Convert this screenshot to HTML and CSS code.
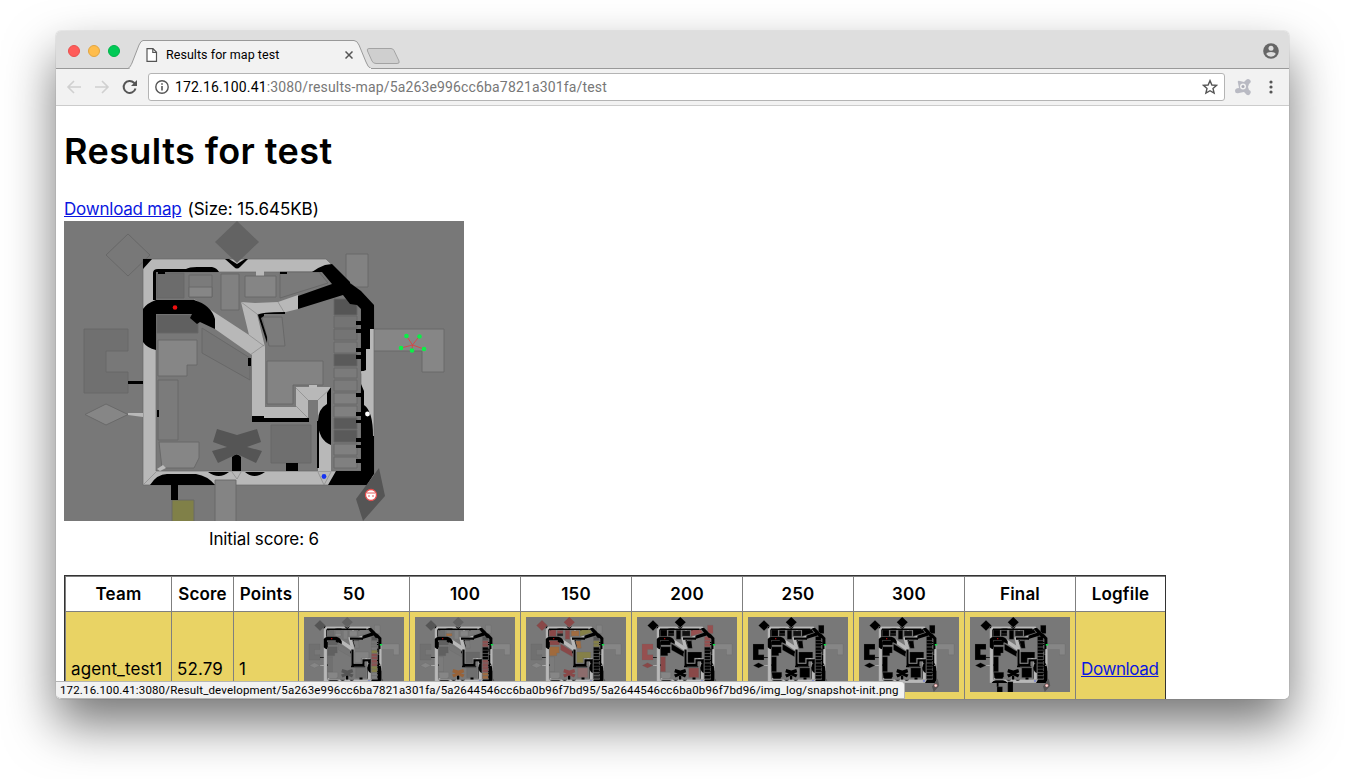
FILE: index.html
```html
<!DOCTYPE html>
<html lang="en">
<head>
<meta charset="utf-8">
<title>Results for map test</title>
<link rel="stylesheet" href="styles.css">
</head>
<body>
<svg class="defs" width="0" height="0" aria-hidden="true">
  <symbol id="map" viewBox="0 0 400 300">
    <rect width="400" height="300" fill="#787878"/>
    <g class="outline">
      <path class="dia1" d="M64 13 86 34 64 55 42 34Z"/>
      <path class="west" d="M20 108H64V130H42V151H64V172H20Z"/>
      <path class="wdia" d="M21 193.500 42 183 64 193.500 42 204Z"/>
      <path class="ne" d="M282 33H304V66H282Z"/>
      <path class="refuge" d="M306 108H380V151H358V130H306Z"/>
    </g>
    <path d="M79 38H262L310 85V264H79ZM92 51V250H297V88L260 51Z" fill="#b8b8b8" fill-rule="evenodd" stroke="#696969" stroke-width=".7"/>
    <path d="M79 48V38H88ZM64 160H79V163H64Z"/>
    <path d="M64 192H79V196L64 194ZM192 50H200V55H192Z" fill="#b8b8b8"/>
    <path class="dia2" d="M173 0 195 21 173 42 151 21Z"/>
    <path d="M161 38H165L173 43 181 38H184L176 46Q173 49 170 46Z"/>
    <path d="M130 78 185 114 177 81 191 82 214 81 234 74V88L222 91 193 93 201 126V186H232V166H267V250H254V179H244V197H188V134L151 108Z" fill="#b8b8b8"/>
    <path d="M185 114 200 125M200 124 186 134M177 81 193 93M214 81 220 91M232 167 244 179M267 167 254 179M232 185 244 197" fill="none" stroke="#808080" stroke-width=".6"/>
    <g class="outline">
      <path class="n1" d="M93 52H120V77H93Z"/>
      <path class="n2" d="M125 54H148V76H125Z"/>
      <path class="n2b" d="M125 66H148V76H125Z"/>
      <path class="n3" d="M157 53H175V89H157Z"/>
      <path class="n4" d="M181 55H212V76H181Z"/>
      <path class="quad" d="M216 51H255L264 62 216 77Z"/>
      <path class="nw" d="M93 94H134V112H93Z"/>
      <path class="w" d="M94 119H133V144H123V155H94Z"/>
      <path class="slant" d="M138 107 186 137V159L138 132Z"/>
      <path class="wedge" d="M198 96H218L221 125H205Z"/>
      <path class="mid" d="M203 140H259V164H229V183H203Z"/>
      <path class="low" d="M94 159H114V219H94Z"/>
      <path class="sw" d="M95 221H135V237L130 247H98Z"/>
      <path class="square" d="M207 204H247V242H207Z"/>
      <path class="stem" d="M151 259H172V301H151Z"/>
      <path class="olive" d="M108 279H130V301H108Z"/>
      <path class="c1" d="M270 78H293V94H270Z"/>
      <path class="c2" d="M270 95H293V107H270ZM270 108H293V119H270Z"/>
      <path class="c3" d="M270 121H293V132H270Z"/>
      <path class="c4" d="M270 133H293V145H270Z"/>
      <path class="c5" d="M270 147H293V157H270ZM270 159H293V170H270Z"/>
      <path class="c6" d="M270 172H293V183H270ZM270 185H293V196H270Z"/>
      <path class="c7" d="M270 197H293V208H270ZM270 209H293V221H270Z"/>
      <path class="c8" d="M270 223H293V234H270ZM270 236H293V247H270Z"/>
    </g>
    <path class="cross" d="M153 208 173 214 193 208 197 221 183 226 198 230 192 242 173 233 154 242 148 230 163 226 149 221Z"/>
    <path d="M89 79V52Q89 48 94 48H122Q125 46 133 46H148Q153 47 155 51H101V53H94V51H92V79ZM79 88Q83 82 92 79H130Q147 84 151 98V108L136 101 133 103 126 97 128 93H92V129Q83 127 79 121Z"/>
    <path d="M248 51Q255 46 261 44L268 43 286 61V56H286V62L297 70 310 84V108H306V128H302V150H297V88L293 84 286 83 279 74 234 88V75L268 63 258 51Z"/>
    <path d="M302 130H309V190H306Q302 160 297 151L302 149V130Z" fill="#b8b8b8"/>
    <path d="M297 150V163L300 170V184Q309 190 309 215H310V253L303 264H264L272 250H297Z"/>
    <path d="M292 100H298V104H292ZM292 108H298V112H292ZM292 127H298V131H292ZM292 134H298V138H292ZM292 172H298V176H292ZM292 191H298V195H292ZM292 199H298V202H292ZM292 217H298V221H292ZM292 224H298V227H292ZM292 238H298V242H292ZM216 51H223V53H216ZM184 137H187V145H184ZM93 189H95V196H93Z"/>
    <path d="M267 166V224Q254 219 254 200 254 188 263 183V172ZM253 200H255V247H253ZM188 195H200V197H245V201H188ZM222 242H234V250H222ZM168 250V236Q173 231 177 236V250ZM107 264H114V279H107ZM86 264Q93 253 103 253H132Q144 255 151 264ZM144 251H165Q155 259 144 251ZM181 251H201Q190 259 181 251ZM194 94Q196 91 221 91V93H200V95L197 97 203 116V122Z"/>
    <path d="M93 248 99 244 102 247 96 250ZM245 164H253V167H245Z" fill="#bbb"/>
    <path d="M79 264 92 251M168 251 173 258 177 251M254 251 260 264 267 251" fill="none" stroke="#888" stroke-width=".7"/>
    <g class="blocked" fill="none" stroke="#000" stroke-width="9">
      <path d="M194 130V191H238V173H261V186M184 86H236"/>
      <path d="M92 49H250M298 150V260M92 100V122" stroke-width="6"/>
    </g>
    <path class="ambulance" d="M315 247 321 275 299 300 292 278Z"/>
    <g class="team-marks">
      <path d="M342.500 115 348.500 124 355.500 115M337 127 348.500 124 360 128M348.500 124 348 129" fill="none" stroke="#e33b3b" stroke-width=".8"/>
      <g fill="#0bef47"><circle cx="342.500" cy="115" r="2.300"/><circle cx="355.500" cy="115.500" r="2.300"/><circle cx="337" cy="127" r="2.300"/><circle cx="348" cy="129.500" r="2.300"/><circle cx="360" cy="128" r="2.300"/></g>
    </g>
    <path class="beacon" d="M303 108H313V114H303Z"/>
    <circle cx="111" cy="86.500" r="2.300" fill="#f01010"/>
    <circle cx="303.500" cy="193" r="2.400" fill="#fff"/>
    <circle cx="260" cy="255.500" r="2.400" fill="#1633f2"/>
    <circle cx="307" cy="274" r="5.500" fill="#fff" stroke="#e64b4b" stroke-width="1.300"/>
    <path d="M303 272H311M304 275H306M308 275H310" stroke="#e35b5b"/>
  </symbol>
</svg>

<div class="window">
  <header class="tabstrip">
    <div class="lights"><i class="red"></i><i class="amber"></i><i class="green"></i></div>
    <div class="tab">
      <svg class="tab-shape" width="246" height="29" viewBox="0 0 246 29"><path d="M0 28.500C2 27.500 3 25 4 23L11 5Q13 .5 15 .5H226Q229 .5 231 5L238 22Q240 27.500 243 28.500" fill="#f2f2f2" stroke="#999"/><path d="M2 28.500H243" stroke="#f2f2f2"/></svg>
      <div class="tab-content">
        <svg width="12" height="14" viewBox="0 0 12 14"><path d="M1 .7H7L10.500 4.300V13.300H1ZM6.800.7V4.500H10.500" fill="#fff" stroke="#555" stroke-width="1.200"/></svg>
        <span class="tab-title">Results for map test</span>
        <svg class="tab-close" width="8" height="8" viewBox="0 0 8 8"><path d="M.5.5 7.500 7.500M7.500.5.5 7.500" stroke="#555" stroke-width="1.500"/></svg>
      </div>
    </div>
    <svg class="new-tab" width="36" height="18" viewBox="0 0 36 18"><path d="M3 1.500H25Q27 1.500 28 3.500L33 14Q34 16.500 31 16.500H10Q7 16.500 6 14L1.500 4Q.5 1.500 3 1.500Z" fill="#cfcfcf" stroke="#a3a3a3"/></svg>
    <svg class="profile" width="16" height="16" viewBox="0 0 16 16"><circle cx="8" cy="8" r="7.800" fill="#666"/><circle cx="8" cy="5.300" r="2.500" fill="#dedede"/><path d="M3.200 11Q4 8.900 8 8.900T12.800 11Q11 13.800 8 13.800T3.200 11Z" fill="#dedede"/></svg>
  </header>
  <div class="toolbar">
    <svg width="16" height="16" viewBox="0 0 16 16"><path d="M15 8H2M8 2 2 8 8 14" fill="none" stroke="#d0d0d0" stroke-width="1.600"/></svg>
    <svg width="16" height="16" viewBox="0 0 16 16"><path d="M1 8H14M8 2 14 8 8 14" fill="none" stroke="#d0d0d0" stroke-width="1.600"/></svg>
    <svg width="16" height="16" viewBox="0 0 16 16"><path d="M13.500 9.500A6 6 0 1 1 12 3.700L14 5.500" fill="none" stroke="#555" stroke-width="2"/><path d="M15 1V7H9Z" fill="#555"/></svg>
    <div class="address">
      <svg width="14" height="14" viewBox="0 0 14 14"><circle cx="7" cy="7" r="6.200" fill="none" stroke="#555" stroke-width="1.400"/><path d="M7 6V10.500M7 3.200V4.800" stroke="#555" stroke-width="1.600"/></svg>
      <span class="url"><b>172.16.100.41</b>:3080/results-map/5a263e996cc6ba7821a301fa/test</span>
      <svg class="star" width="16" height="16" viewBox="0 0 16 16"><path d="M8 1.600 9.900 6 14.600 6.400 11 9.500 12.100 14.100 8 11.700 3.900 14.100 5 9.500 1.400 6.400 6.100 6Z" fill="none" stroke="#555" stroke-width="1.400"/></svg>
    </div>
    <svg class="ext" width="18" height="18" viewBox="0 0 18 18"><path d="M4 5Q3 2 6 3L10 4 12 2Q14 0 16 2T15 6L14 9 15 12Q18 13 16 16T11 15L10 14 5 15Q1 16 1 13T5 10Z" fill="#b9bac3"/><circle cx="9" cy="8.500" r="3" fill="#f2f2f2"/><circle cx="9" cy="8.500" r="1.500" fill="#a9aab5"/></svg>
    <svg class="dots" width="4" height="14" viewBox="0 0 4 14"><g fill="#555"><circle cx="2" cy="2" r="1.600"/><circle cx="2" cy="7" r="1.600"/><circle cx="2" cy="12" r="1.600"/></g></svg>
  </div>
  <main class="page">
    <h1>Results for test</h1>
    <p class="download"><a href="#">Download map</a><span class="size">(Size: 15.645KB)</span></p>
    <figure>
      <svg class="map" width="400" height="300"><use href="#map"/></svg>
      <figcaption>Initial score: 6</figcaption>
    </figure>
    <table>
      <colgroup><col class="col-team"><col class="col-score"><col class="col-points"><col span="7" class="col-shot"><col class="col-log"></colgroup>
      <tr><th>Team</th><th>Score</th><th>Points</th><th>50</th><th>100</th><th>150</th><th>200</th><th>250</th><th>300</th><th>Final</th><th>Logfile</th></tr>
      <tr class="gold">
        <td><span class="team">agent_test1</span></td><td><span class="team">52.79</span></td><td>1</td>
        <td class="shot"><svg class="thumb t50"><use href="#map"/></svg></td>
        <td class="shot"><svg class="thumb t100"><use href="#map"/></svg></td>
        <td class="shot"><svg class="thumb t150"><use href="#map"/></svg></td>
        <td class="shot"><svg class="thumb t200"><use href="#map"/></svg></td>
        <td class="shot"><svg class="thumb burnt"><use href="#map"/></svg></td>
        <td class="shot"><svg class="thumb burnt"><use href="#map"/></svg></td>
        <td class="shot"><svg class="thumb burnt final"><use href="#map"/></svg></td>
        <td><a class="log" href="#">Download</a></td>
      </tr>
    </table>
  </main>
  <div class="status"><span>172.16.100.41:3080/Result_development/5a263e996cc6ba7821a301fa/5a2644546cc6ba0b96f7bd95/5a2644546cc6ba0b96f7bd96/img_log/snapshot-init.png</span></div>
</div>
</body>
</html>
```
FILE: styles.css
```css
* { box-sizing: border-box; }
body { margin: 0; padding: 31px 56px 80px; height: 779px; overflow: hidden; background: #fff; font-family: Inter, "Noto Sans CJK JP", sans-serif; color: #000; }
svg { display: block; flex: none; }
.defs { position: absolute; }
.window { position: relative; width: 1233px; height: 668px; border-radius: 5px; overflow: hidden; background: #fff; }
body::before { content: ""; position: absolute; left: 56px; top: 31px; width: 1233px; height: 668px; border-radius: 5px; box-shadow: 0 25px 50px rgba(0,0,0,.54), 0 0 1px rgba(0,0,0,.5); }

.tabstrip { display: flex; height: 38px; background: #dedede; border-bottom: 1px solid #999; }
.lights { display: flex; gap: 8px; padding: 14px 0 0 12px; width: 73px; flex: none; }
.lights i { width: 12px; height: 12px; border-radius: 50%; flex: none; }
.red { background: #ff5c5a; border: 1px solid #e9504e; }
.amber { background: #ffbd4c; border: 1px solid #e2a541; }
.green { background: #00ca56; border: 1px solid #00b34a; }
.tab { display: grid; width: 246px; height: 29px; margin-top: 9px; margin-left: -1px; flex: none; z-index: 1; }
.tab-shape, .tab-content { grid-area: 1 / 1; }
.tab-content { display: flex; align-items: center; padding: 0 21px 0 18px; z-index: 1; }
.tab-title { font: 12.5px/16px Roboto, sans-serif; margin-left: 8px; white-space: nowrap; letter-spacing: .05px; }
.tab-close { margin-left: auto; }
.new-tab { margin: 16px 0 0 -8px; }
.profile { margin: 12px 10px 0 auto; }

.toolbar { display: flex; align-items: center; height: 37px; padding: 0 16px 0 10px; background: #f2f2f2; border-bottom: 1px solid #ccc; gap: 12px; }
.address { display: flex; align-items: center; width: 1077px; height: 28px; margin-left: -2px; padding: 0 6px; background: #fff; border: 1px solid #b4b4b4; border-radius: 3px; }
.url { font: 14px/18px Roboto, sans-serif; color: #777; margin-left: 6px; letter-spacing: .15px; }
.url b { color: #000; font-weight: 400; }
.star { margin-left: auto; }
.ext { margin-left: -3px; }
.dots { margin-left: 5px; }

.page { padding: 22px 8px 0; font-size: 17px; line-height: 24px; }
h1 { margin: 0; font-size: 36px; line-height: 46px; font-weight: 600; white-space: nowrap; letter-spacing: .42px; }
.download { display: flex; gap: 6px; margin: 23px 0 0; height: 24px; white-space: nowrap; letter-spacing: -.22px; }
.size { letter-spacing: -.03px; }
a { color: #0a17e0; }
figure { margin: 0; width: 400px; }
figcaption { text-align: center; margin-top: 6px; letter-spacing: -.12px; }
table { table-layout: fixed; width: 1102px; margin-top: 24px; border: 1px solid #333; border-spacing: 0; }
th, td { padding: 0 5px; border-left: 1px solid #7f7f7f; border-top: 1px solid #7f7f7f; white-space: nowrap; }
th { height: 35px; padding: 0; font-weight: 600; letter-spacing: .18px; }
td { height: 115px; }
.gold { background: #e9d364; }
.shot { padding: 5px; vertical-align: top; }
.team { letter-spacing: .12px; }
.log { letter-spacing: -.38px; }
.col-team { width: 106px; } .col-score { width: 62px; } .col-points { width: 65px; } .col-shot { width: 111px; } .col-log { width: 90px; }

.status { position: absolute; left: 0; bottom: 0; height: 18px; width: 849px; padding-left: 4px; background: #f2f2f2; border: 1px solid #b5b5b5; border-left: 0; border-radius: 0 4px 0 5px; font: 11.5px/16px Roboto, sans-serif; letter-spacing: .16px; white-space: nowrap; }

.outline { stroke: #666; stroke-width: .9; }
.dia1 { fill: var(--dia1, #787878); } .dia2 { fill: var(--dia2, #636363); }
.west { fill: var(--west, #707070); } .wdia { fill: var(--wdia, #868686); }
.ne { fill: var(--ne, #828282); } .refuge { fill: #868686; }
.n1 { fill: var(--n1, #6c6c6c); } .n2 { fill: var(--n2, #7b7b7b); } .n2b { fill: var(--n2b, #868686); }
.n3 { fill: var(--n3, #818181); } .n4 { fill: var(--n4, #858585); } .quad { fill: var(--quad, #7a7a7a); }
.nw { fill: var(--nw, #606060); } .w { fill: var(--w, #868686); } .slant { fill: var(--slant, #757575); }
.wedge { fill: var(--wedge, #7b7b7b); } .mid { fill: var(--mid, #838383); } .low { fill: var(--low, #7b7b7b); }
.sw { fill: var(--sw, #868686); } .square { fill: var(--square, #6f6f6f); } .cross { fill: var(--cross, #555); }
.stem { fill: var(--stem, #848484); } .olive { fill: var(--olive, #808048); }
.c1 { fill: var(--c1, #555); } .c2 { fill: var(--c2, #747474); } .c3 { fill: var(--c3, #7b7b7b); } .c4 { fill: var(--c4, #5a5a5a); }
.c5 { fill: var(--c5, #7b7b7b); } .c6 { fill: var(--c6, #808080); } .c7 { fill: var(--c7, #5a5a5a); } .c8 { fill: var(--c8, #808080); }
.ambulance { fill: #555; }
.blocked { display: var(--blocked, none); }
.beacon { display: var(--blocked, none); fill: #0bdf47; }
.team-marks { display: var(--marks, inline); }

.thumb { width: 100px; height: 75px; --blocked: inline; --marks: none; --dia1: #555; --dia2: #626262; }
.t50 { --c4: #858048; --c5: #8c5050; --c6: #8c5050; --c7: #858048; --low: #707070; --w: #606060; }
.t100 { --n2b: #a06c42; --cross: #986238; --w: #606060; --c2: #8c5050; --c3: #000; --c4: #000; --c5: #000; --c6: #8c5050; --c7: #8c5050; --c8: #a06c42; --mid: #686868; }
.t150 { --dia1: #894848; --dia2: #894848; --n1: #894848; --n2: #894848; --n2b: #222; --n3: #894848; --n4: #a06c42; --quad: #858048; --nw: #894848; --w: #a06a3c; --slant: #894848; --wedge: #a06c42; --mid: #858048; --cross: #894848; --square: #8c6c6c; --c2: #858048; --c3: #000; --c4: #000; --c5: #000; --c6: #000; --c7: #000; --c8: #222; }
.t200, .burnt { --dia1: #000; --dia2: #000; --n1: #000; --n2: #000; --n2b: #111; --n3: #000; --n4: #111; --nw: #000; --w: #000; --slant: #000; --wedge: #000; --mid: #000; --cross: #000; --c1: #000; --c2: #000; --c3: #000; --c4: #000; --c5: #000; --c6: #000; --c7: #000; --c8: #000; }
.t200 { --west: #965050; --wdia: #894848; --ne: #965050; --quad: #965050; --low: #894848; --square: #894848; --c1: #965050; --c2: #965050; }
.burnt { --west: #000; --wdia: #000; --ne: #000; --quad: #000; --low: #000; --sw: #000; --square: #000; }
.final { --stem: #000; --olive: #000; }
```
